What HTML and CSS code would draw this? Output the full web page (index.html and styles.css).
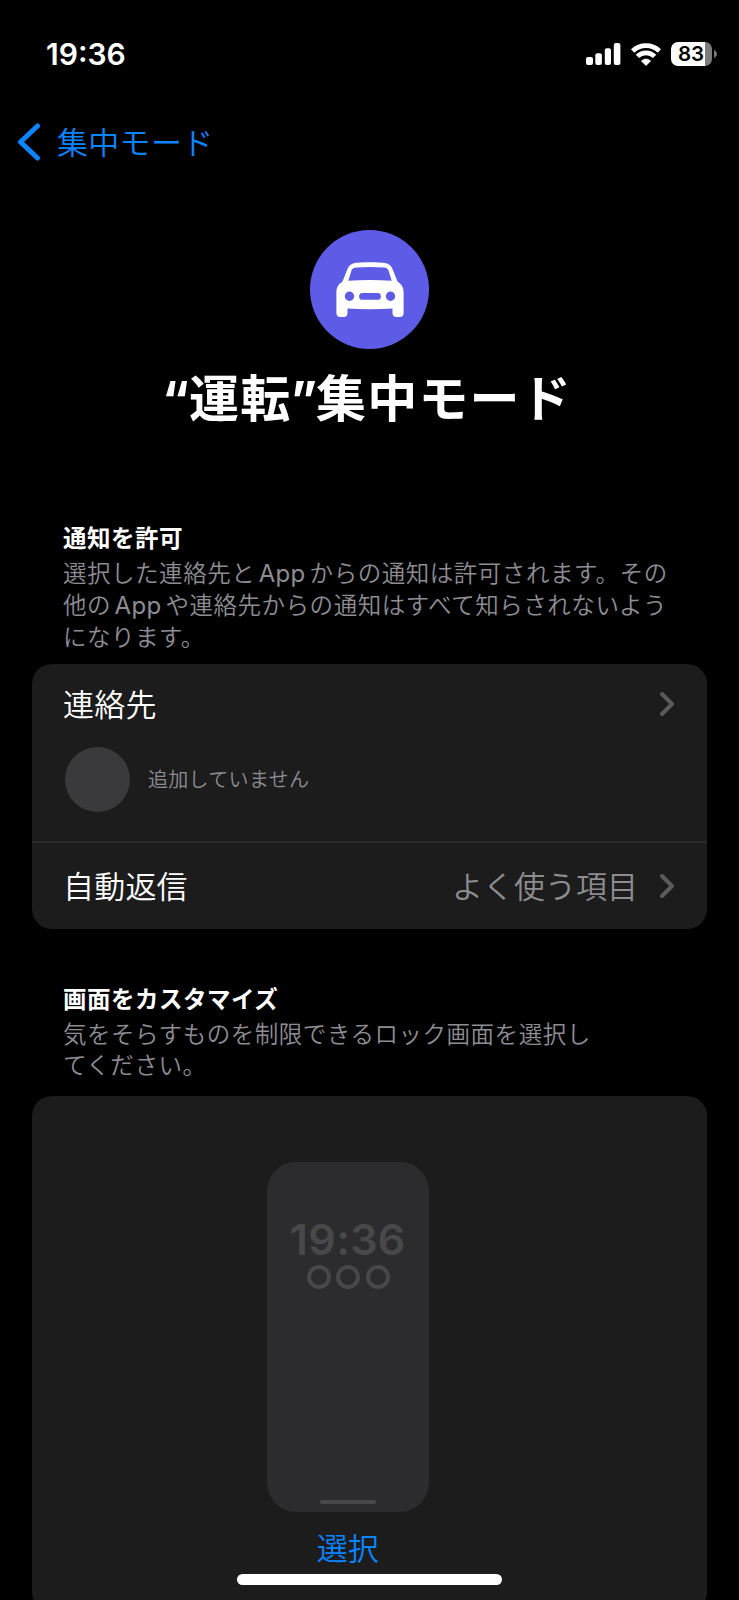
FILE: index.html
```html
<!DOCTYPE html>
<html lang="ja">
<head>
<meta charset="utf-8">
<title>集中モード</title>
<link rel="stylesheet" href="styles.css">
</head>
<body>
<main class="screen">
  <header class="status">
    <span class="clock">19:36</span>
    <div class="indicators">
      <svg class="signal" width="35" height="22" viewBox="0 0 35 22" fill="#fff">
        <rect x="0" y="14" width="7" height="8" rx="2"/>
        <rect x="9.3" y="10.3" width="6.6" height="11.7" rx="2"/>
        <rect x="18.8" y="5.2" width="6.2" height="16.8" rx="2"/>
        <rect x="27.8" y="0" width="6.6" height="22" rx="2"/>
      </svg>
      <svg class="wifi" width="30" height="23" viewBox="0 0 30 23">
        <g fill="none" stroke="#fff" stroke-width="4.8">
          <path d="M1.6 8A19.5 19.5 0 0 1 28.4 8"/>
          <path d="M6.4 13.4A12.2 12.2 0 0 1 23.6 13.4"/>
        </g>
        <path d="M15 22.6L10.3 18Q15 13.900 19.700 18Z" fill="#fff" stroke="#fff" stroke-width=".6" stroke-linejoin="round"/>
      </svg>
      <div class="battery"><span class="level">83</span></div>
      <svg class="nub" width="3" height="8" viewBox="0 0 3 8"><path d="M0 0Q3 1.300 3 4T0 8Z" fill="#7c7c7e"/></svg>
    </div>
  </header>

  <nav class="nav">
    <svg width="24" height="40" viewBox="0 0 24 40" fill="none" stroke="#0a84ff" stroke-width="5" stroke-linecap="round" stroke-linejoin="round"><path d="M20.500 4L3.500 20L20.500 36"/></svg>
    <span class="back">集中モード</span>
  </nav>

  <section class="hero">
    <div class="badge">
      <svg width="68" height="56" viewBox="0 0 68 56">
        <path fill="#fff" fill-rule="evenodd" d="M20 .8C25 -.1 43 -.1 48 .8C52.500 1.300 55 3.500 56.500 7L61.500 19.500C65 22 67.600 25 67.600 30V51Q67.600 55 63.600 55H60.600Q56.500 55 56.500 51V46.500Q34 48 11.500 46.500V51Q11.500 55 7.400 55H4.400Q.4 55 .4 51V30C.4 25 3 22 6.500 19.500L11.500 7C13 3.500 15.500 1.300 20 .8ZM20 5.600C17.500 5.800 16.200 6.700 15.400 8.700L12.300 18.700Q34 17.300 55.700 18.700L52.600 8.700C51.800 6.700 50.500 5.800 48 5.600Q34 4.600 20 5.600ZM13.500 29.500A4.700 4.700 0 1 0 13.500 38.900A4.700 4.700 0 1 0 13.500 29.500ZM54.500 29.500A4.700 4.700 0 1 0 54.500 38.900A4.700 4.700 0 1 0 54.500 29.500ZM26.500 31A3.400 3.400 0 0 0 26.500 37.800H41.500A3.400 3.400 0 0 0 41.500 31Z"/>
      </svg>
    </div>
    <h1 class="title"><span class="quote">“</span>運転<span class="quote close">”</span>集中モード</h1>
  </section>

  <section class="allow">
    <h2 class="heading">通知を許可</h2>
    <p class="note">選択した連絡先と<span class="latin">App</span>からの通知は許可されます。その<br>他の<span class="latin">App</span>や連絡先からの通知はすべて知らされないよう<br>になります。</p>
    <div class="card">
      <div class="contacts">
        <div class="row">
          <span>連絡先</span>
          <svg class="chevron" width="16" height="26" viewBox="0 0 16 26"><path d="M3 3L13 13L3 23"/></svg>
        </div>
        <div class="person"><span class="avatar"></span><span class="none">追加していません</span></div>
      </div>
      <div class="row reply">
        <span>自動返信</span>
        <span class="value">よく使う項目</span>
        <svg class="chevron" width="16" height="26" viewBox="0 0 16 26"><path d="M3 3L13 13L3 23"/></svg>
      </div>
    </div>
  </section>

  <section class="customize">
    <h2 class="heading">画面をカスタマイズ</h2>
    <p class="note">気をそらすものを制限できるロック画面を選択し<br>てください。</p>
    <div class="card lock">
      <div class="phone">
        <span class="phone-time">19:36</span>
        <div class="widgets"><i></i><i></i><i></i></div>
        <span class="phone-bar"></span>
      </div>
      <span class="choose">選択</span>
    </div>
  </section>
  <div class="home"></div>
</main>
</body>
</html>
```

FILE: styles.css
```css
* { box-sizing: border-box; }
body { margin: 0; background: #000; }
.screen {
  position: relative;
  width: 739px;
  height: 1600px;
  overflow: hidden;
  background: #000;
  color: #fff;
  font-family: "Noto Sans CJK JP", sans-serif;
  font-weight: 350;
  font-size: 31px;
  white-space: nowrap;
}
.status {
  display: flex;
  justify-content: space-between;
  height: 108px;
  padding: 36px 22px 0 46px;
}
.clock { font: 600 30px/36px Inter, sans-serif; }
.indicators { display: flex; align-items: center; height: 36px; }
.wifi { margin: 0 10px 0 10px; }
.battery {
  width: 41px;
  height: 24px;
  border-radius: 7px;
  background: linear-gradient(90deg, #fff 34px, #7c7c7e 34px);
}
.level {
  display: block;
  padding-right: 1px;
  color: #000;
  font: 600 20.5px/24px Inter, sans-serif;
  text-align: center;
}
.nub { margin-left: 2px; }
.nav {
  display: flex;
  align-items: center;
  gap: 16px;
  height: 68px;
  padding-left: 17px;
  color: #0a84ff;
  letter-spacing: .3px;
}
.back { padding-bottom: 4px; }
.hero {
  display: flex;
  flex-direction: column;
  align-items: center;
  height: 345px;
  padding-top: 54px;
}
.badge {
  display: flex;
  align-items: center;
  justify-content: center;
  width: 119px;
  height: 119px;
  border-radius: 50%;
  background: #5e5ce6;
}
.title {
  margin: 9px 0 0 -5px;
  font-size: 50px;
  line-height: 74px;
  font-weight: 700;
  letter-spacing: 1.2px;
}
.quote {
  display: inline-block;
  line-height: 1;
  font-family: Inter, sans-serif;
  font-size: 50px;
  font-weight: 700;
  letter-spacing: 0;
}
.close { margin: 0 -1px 0 -1px; }
.heading {
  margin: 0;
  padding-left: 63px;
  font-size: 23.500px;
  line-height: 32px;
  font-weight: 700;
  letter-spacing: .5px;
}
.note {
  margin: 4px 0 0;
  padding-left: 63px;
  color: #8d8d93;
  font-size: 23.500px;
  line-height: 31.200px;
  letter-spacing: .53px;
}
.latin { margin: 0 4px 0 3.500px; font-family: Inter, sans-serif; font-size: 24px; font-weight: 400; letter-spacing: .3px; }
.card {
  margin: 11px 32px 0 31.500px;
  border-radius: 20px;
  background: #1c1c1d;
}
.contacts { height: 179px; border-bottom: 2px solid #2b2b2d; }
.row {
  display: flex;
  align-items: center;
  height: 80px;
  padding: 0 32px 0 31.500px;
}
.row > span { padding-bottom: 3px; }
.row > :first-child { flex: 1; letter-spacing: .2px; }
.reply { height: 86px; }
.value { margin-right: 21px; color: #8d8d8f; }
.chevron { fill: none; stroke: #5b5b5e; stroke-width: 4; stroke-linecap: round; stroke-linejoin: round; }
.person {
  display: flex;
  align-items: center;
  gap: 18px;
  margin: 3px 0 0 33.500px;
  color: #8d8d93;
  font-size: 20px;
  letter-spacing: .3px;
}
.none { padding-bottom: 2px; }
.avatar { width: 65px; height: 65px; border-radius: 50%; background: #3a3a3c; }
.customize { margin-top: 53px; }
.lock {
  display: flex;
  flex-direction: column;
  align-items: center;
  height: 516px;
  margin-top: 16px;
  padding: 66px 43px 0 0;
}
.phone {
  display: flex;
  flex-direction: column;
  align-items: center;
  width: 162px;
  height: 350px;
  padding: 51px 0 8px;
  border-radius: 29px;
  background: #2c2c2e;
  color: #48484a;
}
.phone-time { font: 600 43px/52px Inter, sans-serif; letter-spacing: .3px; }
.widgets { display: flex; gap: 5.500px; padding-left: 1px; }
.widgets i { width: 24px; height: 24px; border: 4px solid #48484a; border-radius: 50%; }
.phone-bar { width: 56px; height: 4px; margin-top: auto; border-radius: 2px; background: #48484a; }
.choose { margin-top: 12px; line-height: 46px; color: #0a84ff; }
.home {
  position: absolute;
  left: 237px;
  top: 1574px;
  width: 265px;
  height: 11px;
  border-radius: 6px;
  background: #fff;
}
```
